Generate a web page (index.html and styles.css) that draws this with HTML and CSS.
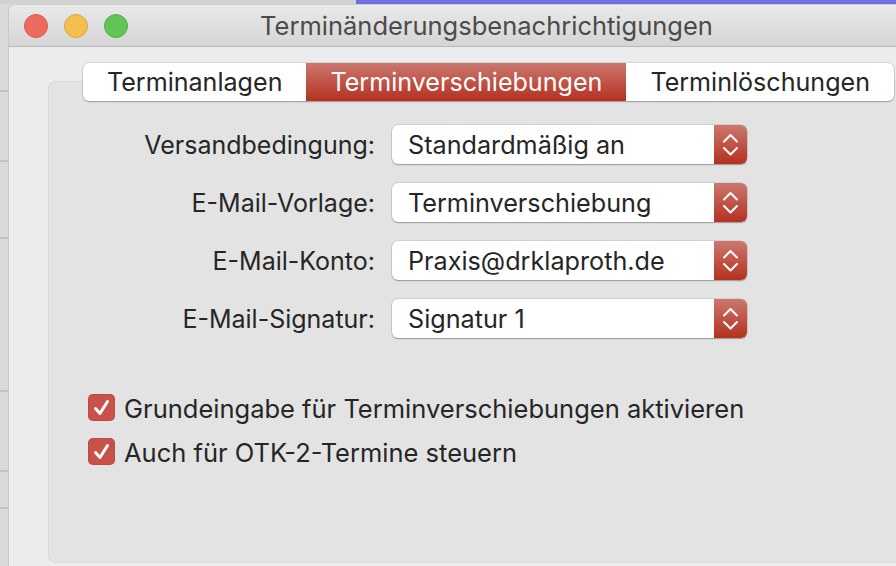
FILE: index.html
```html
<!DOCTYPE html>
<html lang="de">
<head>
<meta charset="utf-8">
<title>Terminänderungsbenachrichtigungen</title>
<link rel="stylesheet" href="styles.css">
</head>
<body>
<div class="desk">
  <div class="topstrip"><div class="ts-gray"></div><div class="ts-purple"></div></div>
  <div class="deskrow">
    <div class="side">
      <div class="sline s1"></div>
      <div class="sline s2"></div>
      <div class="sline s3"></div>
      <div class="sline s4"></div>
      <div class="sline s5"></div>
      <div class="sline s6"></div>
    </div>
    <div class="window">
      <div class="titlebar">
        <div class="lights">
          <span class="light red"></span>
          <span class="light yellow"></span>
          <span class="light green"></span>
        </div>
        <div class="title">Terminänderungsbenachrichtigungen</div>
        <div></div>
      </div>
      <div class="content">
        <div class="tabs">
          <div class="tab">Terminanlagen</div>
          <div class="tab active">Terminverschiebungen</div>
          <div class="tab">Terminlöschungen</div>
        </div>
        <div class="group">
          <div class="form">
            <div class="lbl">Versandbedingung:</div>
            <div class="popup"><span class="pv">Standardmäßig an</span><span class="arrows"><svg width="33" height="39" viewBox="0 0 33 39"><path d="M10 16.5 L16.5 10 L23 16.5 M10 23 L16.5 29.5 L23 23" fill="none" stroke="#fff" stroke-width="2" stroke-linecap="round" stroke-linejoin="round"/></svg></span></div>
            <div class="lbl">E-Mail-Vorlage:</div>
            <div class="popup"><span class="pv">Terminverschiebung</span><span class="arrows"><svg width="33" height="39" viewBox="0 0 33 39"><path d="M10 16.5 L16.5 10 L23 16.5 M10 23 L16.5 29.5 L23 23" fill="none" stroke="#fff" stroke-width="2" stroke-linecap="round" stroke-linejoin="round"/></svg></span></div>
            <div class="lbl">E-Mail-Konto:</div>
            <div class="popup"><span class="pv">Praxis@drklaproth.de</span><span class="arrows"><svg width="33" height="39" viewBox="0 0 33 39"><path d="M10 16.5 L16.5 10 L23 16.5 M10 23 L16.5 29.5 L23 23" fill="none" stroke="#fff" stroke-width="2" stroke-linecap="round" stroke-linejoin="round"/></svg></span></div>
            <div class="lbl">E-Mail-Signatur:</div>
            <div class="popup"><span class="pv">Signatur 1</span><span class="arrows"><svg width="33" height="39" viewBox="0 0 33 39"><path d="M10 16.5 L16.5 10 L23 16.5 M10 23 L16.5 29.5 L23 23" fill="none" stroke="#fff" stroke-width="2" stroke-linecap="round" stroke-linejoin="round"/></svg></span></div>
          </div>
          <div class="checks">
            <div class="check"><span class="box"><svg width="27" height="27" viewBox="0 0 27 27"><path d="M7.5 14.5 L12 19.5 L19.5 7.5" fill="none" stroke="#fff" stroke-width="3" stroke-linecap="round" stroke-linejoin="round"/></svg></span><span class="ctext">Grundeingabe für Terminverschiebungen aktivieren</span></div>
            <div class="check"><span class="box"><svg width="27" height="27" viewBox="0 0 27 27"><path d="M7.5 14.5 L12 19.5 L19.5 7.5" fill="none" stroke="#fff" stroke-width="3" stroke-linecap="round" stroke-linejoin="round"/></svg></span><span class="ctext">Auch für OTK-2-Termine steuern</span></div>
          </div>
        </div>
      </div>
    </div>
  </div>
</div>
</body>
</html>
```
FILE: styles.css
```css
* { box-sizing: border-box; }
html, body { margin: 0; padding: 0; }
body {
  width: 896px;
  height: 566px;
  overflow: hidden;
  background: #d9d9d9;
  font-family: "Inter", "Open Sans", sans-serif;
  color: #262626;
}
.desk {
  width: 896px;
  height: 566px;
  display: flex;
  flex-direction: column;
  overflow: hidden;
}
.topstrip {
  height: 4px;
  display: flex;
  flex: none;
}
.ts-gray { width: 356px; background: #d2d2d2; }
.ts-purple { flex: 1; background: #6f6fe0; }
.deskrow {
  flex: 1;
  display: flex;
  min-height: 0;
}
.side {
  width: 8px;
  flex: none;
  background: #dadada;
  display: flex;
  flex-direction: column;
}
.sline { border-top: 2px solid #c2c2c2; }
.s1 { margin-top: 86px; }
.s2 { margin-top: 68px; }
.s3 { margin-top: 75px; }
.s4 { margin-top: 151px; }
.s5 { margin-top: 78px; }
.s6 { margin-top: 35px; }
.window {
  width: 956px;
  flex: none;
  background: #ececec;
  border-radius: 7px 7px 0 0;
  border-left: 1px solid #c9c9c9;
  border-top: 1px solid #cfcfcf;
  display: flex;
  flex-direction: column;
}
.titlebar {
  height: 42px;
  flex: none;
  display: grid;
  grid-template-columns: 1fr auto 1fr;
  align-items: center;
  background: linear-gradient(#e9e9e9, #d5d5d5);
  border-bottom: 1px solid #b9b9b9;
  border-radius: 7px 7px 0 0;
}
.lights {
  display: flex;
  gap: 16px;
  padding-left: 15px;
}
.light {
  width: 24px;
  height: 24px;
  border-radius: 50%;
}
.red { background: #ec6b5f; border: 1px solid #d9574c; }
.yellow { background: #f4bf4f; border: 1px solid #dea63c; }
.green { background: #61c454; border: 1px solid #50ad44; }
.title {
  font-size: 25.5px;
  color: #4b4b4b;
  white-space: nowrap;
}
.content {
  flex: 1;
  display: flex;
  flex-direction: column;
  align-items: center;
  padding: 16px 40px 3px 39px;
}
.tabs {
  position: relative;
  z-index: 1;
  display: flex;
  height: 38px;
  margin-left: 5px;
  background: #fff;
  border-radius: 6px;
  box-shadow: 0 0 0 0.5px rgba(0,0,0,0.18), 0 1px 1.5px rgba(0,0,0,0.25);
  overflow: hidden;
}
.tab {
  padding: 0 24px;
  font-size: 25.1px;
  line-height: 38px;
  color: #262626;
  white-space: nowrap;
}
.active {
  color: #fff;
  background: linear-gradient(#cb786f, #b5301f);
}
.group {
  align-self: stretch;
  margin-top: -20px;
  flex: 1;
  background: #e3e3e3;
  border: 1px solid #d8d8d8;
  border-radius: 7px;
  padding: 43px 0 0 39px;
}
.form {
  display: grid;
  grid-template-columns: 287px 355px;
  grid-auto-rows: 39px;
  column-gap: 17px;
  row-gap: 19px;
  align-items: center;
}
.lbl {
  text-align: right;
  font-size: 25px;
  white-space: nowrap;
}
.popup {
  height: 39px;
  display: flex;
  align-items: center;
  background: #fff;
  border-radius: 6px;
  box-shadow: 0 0 0 0.5px rgba(0,0,0,0.16), 0 1px 1.5px rgba(0,0,0,0.28);
  overflow: hidden;
}
.pv {
  flex: 1;
  padding-left: 16px;
  font-size: 25.2px;
  white-space: nowrap;
}
.arrows {
  width: 33px;
  height: 39px;
  flex: none;
  background: linear-gradient(#cb786f, #b5301f);
}
.arrows svg { display: block; }
.checks {
  margin-top: 56px;
  display: flex;
  flex-direction: column;
  gap: 17px;
}
.check {
  display: flex;
  align-items: center;
  gap: 9px;
  height: 27px;
}
.box {
  width: 27px;
  height: 27px;
  flex: none;
  border-radius: 5px;
  background: #c8524a;
  box-shadow: inset 0 0 0 0.5px rgba(0,0,0,0.15);
}
.box svg { display: block; }
.ctext {
  font-size: 25.5px;
  line-height: 27px;
  padding-top: 2px;
  white-space: nowrap;
}
```
